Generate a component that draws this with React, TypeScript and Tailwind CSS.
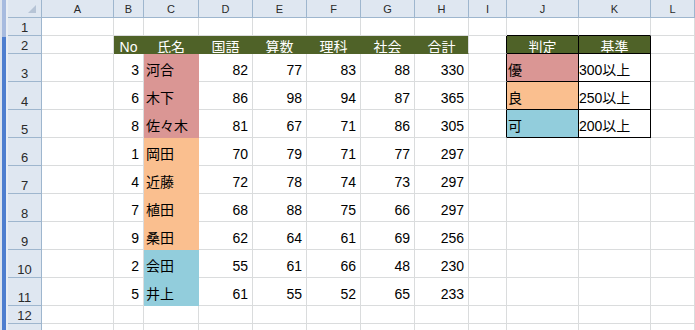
import React from "react";

const font = "font-['Liberation_Sans','Noto_Sans_CJK_JP',sans-serif]";

const cols = ["A", "B", "C", "D", "E", "F", "G", "H", "I", "J", "K", "L"];
const heads = ["No", "氏名", "国語", "算数", "理科", "社会", "合計"];

type Fill = "pink" | "orange" | "blue";

interface Student {
  no: number;
  name: string;
  scores: number[];
  fill: Fill;
}

const students: Student[] = [
  { no: 3, name: "河合", scores: [82, 77, 83, 88, 330], fill: "pink" },
  { no: 6, name: "木下", scores: [86, 98, 94, 87, 365], fill: "pink" },
  { no: 8, name: "佐々木", scores: [81, 67, 71, 86, 305], fill: "pink" },
  { no: 1, name: "岡田", scores: [70, 79, 71, 77, 297], fill: "orange" },
  { no: 4, name: "近藤", scores: [72, 78, 74, 73, 297], fill: "orange" },
  { no: 7, name: "植田", scores: [68, 88, 75, 66, 297], fill: "orange" },
  { no: 9, name: "桑田", scores: [62, 64, 61, 69, 256], fill: "orange" },
  { no: 2, name: "会田", scores: [55, 61, 66, 48, 230], fill: "blue" },
  { no: 5, name: "井上", scores: [61, 55, 52, 65, 233], fill: "blue" },
];

const grades: { label: string; rule: string; fill: Fill }[] = [
  { label: "優", rule: "300以上", fill: "pink" },
  { label: "良", rule: "250以上", fill: "orange" },
  { label: "可", rule: "200以上", fill: "blue" },
];

const fillBg: Record<Fill, string> = {
  pink: "bg-[#da9694]",
  orange: "bg-[#fabf8f]",
  blue: "bg-[#92cddc]",
};
const fillRight: Record<Fill, string> = {
  pink: "border-r-[#da9694]",
  orange: "border-r-[#fabf8f]",
  blue: "border-r-[#92cddc]",
};
const fillBottom: Record<Fill, string> = {
  pink: "border-b-[#da9694]",
  orange: "border-b-[#fabf8f]",
  blue: "border-b-[#92cddc]",
};

function Cell({ r, c }: { r: number; c: number }) {
  let bg = "bg-white";
  let right = "border-r-[#dadcdd]";
  let bottom = "border-b-[#dadcdd]";
  let text = "text-black";
  let align = "justify-end pr-[4px]";
  let content: React.ReactNode = null;

  if (r === 2 && c >= 1 && c <= 7) {
    bg = "bg-[#4f6228]";
    bottom = "border-b-[#4f6228]";
    if (c < 7) right = "border-r-[#4f6228]";
    text = "text-white";
    align = "justify-center";
    content = heads[c - 1];
  }

  if (r >= 3 && r <= 11) {
    const s = students[r - 3];
    if (c === 1) content = s.no;
    if (c === 2) {
      bg = fillBg[s.fill];
      right = fillRight[s.fill];
      bottom = fillBottom[s.fill];
      align = "justify-start pl-[2px]";
      content = s.name;
    }
    if (c >= 3 && c <= 7) content = s.scores[c - 3];
  }

  // 判定表
  if (r === 1 && (c === 9 || c === 10)) bottom = "border-b-black";
  if (r >= 2 && r <= 5 && c === 8) right = "border-r-black";
  if (r >= 2 && r <= 5 && (c === 9 || c === 10)) {
    right = "border-r-black";
    bottom = "border-b-black";
    if (r === 2) {
      bg = "bg-[#4f6228]";
      text = "text-white";
      align = "justify-center";
      content = c === 9 ? "判定" : "基準";
    } else {
      const g = grades[r - 3];
      if (c === 9) {
        bg = fillBg[g.fill];
        align = "justify-start pl-[1px]";
        content = g.label;
      } else {
        align = "justify-start pl-0";
        content = g.rule;
      }
    }
  }

  return (
    <div
      className={`flex items-center overflow-hidden whitespace-nowrap border-r border-b pt-[5px] text-[14px] leading-4 ${bg} ${right} ${bottom} ${text} ${align}`}
    >
      {content}
    </div>
  );
}

export default function App() {
  const rowNums = Array.from({ length: 13 }, (_, i) => i + 1);

  return (
    <div className={`flex h-[330px] w-[695px] overflow-hidden bg-white ${font}`}>
      {/* 左端のバー */}
      <div className="flex w-[8px] shrink-0 flex-col border-l-2 border-r-2 border-l-[#dde4ee] border-r-[#e9eef4]">
        <div className="h-[37px] bg-[#a7bbdf]" />
        <div className="flex-1 bg-[#4e7ecf]" />
      </div>

      <div className="flex flex-1 flex-col">
        <div className="h-[3px] bg-[#e6eaf0]" />
        <div className="h-[1px] bg-[#9aa8b8]" />
        <div className="h-[1px] bg-white" />

        <div className="grid grid-cols-[34px_72px_30px_55px_54px_54px_54px_54px_54px_38px_72px_72px_1fr] grid-rows-[18px_18px_18px_repeat(9,28px)_18px_18px]">
          {/* 列見出し */}
          <div className="relative border-r border-b border-r-[#9eb6ce] border-b-[#9eb6ce] bg-[#dfe7f1]">
            <svg className="absolute left-[20px] top-[5px]" width="9" height="9" viewBox="0 0 9 9">
              <polygon points="8,0 8,8 0,8" fill="#b6c4d6" />
            </svg>
          </div>
          {cols.map((col) => (
            <div
              key={col}
              className="flex items-center justify-center border-r border-b border-r-[#9eb6ce] border-b-[#9eb6ce] bg-[#dfe7f1] pt-[2px] text-[11px] leading-none text-[#2a2a2a]"
            >
              {col}
            </div>
          ))}

          {rowNums.map((r) => (
            <React.Fragment key={r}>
              <div className="flex items-end justify-center border-r border-b border-r-[#9eb6ce] border-b-[#9eb6ce] bg-[#dfe7f1] pb-[1px] text-[13px] leading-none text-[#2a2a2a]">
                {r <= 12 ? r : null}
              </div>
              {cols.map((_, c) => (
                <Cell key={c} r={r} c={c} />
              ))}
            </React.Fragment>
          ))}
        </div>
      </div>
    </div>
  );
}
